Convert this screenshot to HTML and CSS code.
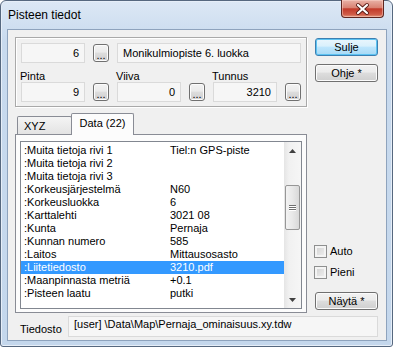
FILE: index.html
```html
<!DOCTYPE html>
<html lang="fi">
<head>
<meta charset="UTF-8">
<title>Pisteen tiedot</title>
<link rel="stylesheet" href="styles.css">
</head>
<body>

<div class="window">
    <div class="titlebar">
        <span class="title">Pisteen tiedot</span>
        <div class="close-btn">
            <svg width="41" height="16" viewBox="0 0 41 16">
                <path d="M16 4 L25 12 M25 4 L16 12" stroke="#5a1d17" stroke-width="4" stroke-linecap="round"/>
                <path d="M16 4 L25 12 M25 4 L16 12" stroke="#ffffff" stroke-width="2.2" stroke-linecap="round"/>
            </svg>
        </div>
    </div>

    <div class="client">
        <div class="main">
            <div class="left">
                <div class="groupbox">
                    <div class="field-row">
                        <div class="field num">6</div>
                        <button class="dots">...</button>
                        <div class="field wide">Monikulmiopiste 6. luokka</div>
                    </div>
                    <div class="labels">
                        <span>Pinta</span>
                        <span>Viiva</span>
                        <span>Tunnus</span>
                    </div>
                    <div class="field-row">
                        <div class="field num">9</div>
                        <button class="dots">...</button>
                        <div class="field num">0</div>
                        <button class="dots">...</button>
                        <div class="field num">3210</div>
                        <button class="dots">...</button>
                    </div>
                </div>

                <div class="tabs">
                    <div class="tab">XYZ</div>
                    <div class="tab active">Data (22)</div>
                </div>
                <div class="tab-panel">
                    <div class="listbox">
                        <div class="list-rows">
                            <div class="list-row"><span class="key">:Muita tietoja rivi 1</span><span>Tiel:n GPS-piste</span></div>
                            <div class="list-row"><span class="key">:Muita tietoja rivi 2</span><span></span></div>
                            <div class="list-row"><span class="key">:Muita tietoja rivi 3</span><span></span></div>
                            <div class="list-row"><span class="key">:Korkeusjärjestelmä</span><span>N60</span></div>
                            <div class="list-row"><span class="key">:Korkeusluokka</span><span>6</span></div>
                            <div class="list-row"><span class="key">:Karttalehti</span><span>3021 08</span></div>
                            <div class="list-row"><span class="key">:Kunta</span><span>Pernaja</span></div>
                            <div class="list-row"><span class="key">:Kunnan numero</span><span>585</span></div>
                            <div class="list-row"><span class="key">:Laitos</span><span>Mittausosasto</span></div>
                            <div class="list-row selected"><span class="key">:Liitetiedosto</span><span>3210.pdf</span></div>
                            <div class="list-row"><span class="key">:Maanpinnasta metriä</span><span>+0.1</span></div>
                            <div class="list-row"><span class="key">:Pisteen laatu</span><span>putki</span></div>
                        </div>
                        <div class="scrollbar">
                            <div class="sb-btn">
                                <svg width="7" height="4" viewBox="0 0 7 4"><path d="M0 4 L3.5 0 L7 4 Z" fill="#404040"/></svg>
                            </div>
                            <div class="sb-track">
                                <div class="sb-thumb">
                                    <span></span><span></span><span></span>
                                </div>
                            </div>
                            <div class="sb-btn">
                                <svg width="7" height="4" viewBox="0 0 7 4"><path d="M0 0 L3.5 4 L7 0 Z" fill="#404040"/></svg>
                            </div>
                        </div>
                    </div>
                </div>
            </div>

            <div class="side">
                <button class="btn default">Sulje</button>
                <button class="btn">Ohje *</button>
                <div class="checks">
                    <label class="check"><span class="box"></span>Auto</label>
                    <label class="check"><span class="box"></span>Pieni</label>
                </div>
                <button class="btn show">Näytä *</button>
            </div>
        </div>

        <div class="footer">
            <span class="footer-label">Tiedosto</span>
            <div class="field path">[user] \Data\Map\Pernaja_ominaisuus.xy.tdw</div>
        </div>
    </div>
</div>

</body>
</html>
```

FILE: styles.css
```css
body {
    margin: 0;
    padding: 0;
    background-color: #ffffff;
    font-family: "Liberation Sans", Arial, sans-serif;
    font-size: 11px;
    color: #000;
}

/* window frame */
.window {
    width: 393px;
    height: 347px;
    box-sizing: border-box;
    border: 1px solid #56687f;
    border-radius: 6px 6px 3px 3px;
    background: linear-gradient(#dce8f5, #c8daee 40px, #c4d7ec);
    box-shadow: inset 0 0 0 1px #e6eef8;
    display: flex;
    flex-direction: column;
}

.titlebar {
    height: 28px;
    display: flex;
    align-items: flex-start;
}

.title {
    font-size: 12px;
    line-height: 14px;
    margin: 7px 0 0 7px;
}

.close-btn {
    margin: -1px 8px 0 auto;
    width: 43px;
    height: 18px;
    box-sizing: border-box;
    border: 1px solid #5e2620;
    border-top: none;
    border-radius: 0 0 4px 4px;
    background: linear-gradient(#e9b2a7, #d98273 45%, #c23a2a 52%, #cf5c48 85%, #e49a80);
    box-shadow: inset 0 0 0 1px rgba(255, 220, 210, 0.45);
}

.close-btn svg {
    display: block;
    margin: 1px 0 0 0;
}

.client {
    flex: 1;
    margin: 0 5px 5px 6px;
    border: 1px solid #8ea3bd;
    background-color: #f0f0f0;
    padding: 7px 8px 3px 7px;
    display: flex;
    flex-direction: column;
}

.main {
    display: flex;
    gap: 8px;
}

.left {
    width: 292px;
    display: flex;
    flex-direction: column;
}

/* top group */
.groupbox {
    height: 70px;
    box-sizing: border-box;
    border: 1px solid #a9a9a9;
    box-shadow: inset 1px 1px 0 #fff, 1px 1px 0 #fff;
    padding: 5px 5px 4px 5px;
}

.field-row {
    display: flex;
    align-items: center;
    gap: 8px;
    height: 20px;
}

.field {
    height: 20px;
    box-sizing: border-box;
    border: 1px solid #dadada;
    background-color: #f6f6f6;
    line-height: 18px;
    white-space: nowrap;
    overflow: hidden;
}

.field.num {
    width: 64px;
    text-align: right;
    padding-right: 5px;
}

.field.wide {
    flex: 1;
    padding-left: 5px;
}

.dots {
    width: 16px;
    height: 18px;
    padding: 0;
    border: 1px solid #707070;
    border-radius: 3px;
    background: linear-gradient(#f3f3f3, #ebebeb 45%, #dddddd 50%, #cfcfcf);
    box-shadow: inset 0 0 0 1px #fcfcfc;
    font-family: "Liberation Sans", Arial, sans-serif;
    font-size: 11px;
    line-height: 20px;
    color: #000;
}

.labels {
    display: flex;
    height: 19px;
    box-sizing: border-box;
    padding-top: 7px;
    line-height: 12px;
}

.labels span {
    flex: 0 0 96px;
    margin-left: -1px;
    margin-right: 1px;
}

/* tabs */
.tabs {
    margin-top: 6px;
    height: 21px;
    display: flex;
    align-items: flex-end;
    padding-left: 2px;
}

.tab {
    width: 55px;
    height: 18px;
    box-sizing: border-box;
    border: 1px solid #898c95;
    border-bottom: none;
    border-radius: 2px 2px 0 0;
    background: linear-gradient(#f4f4f4, #e3e3e3);
    padding: 3px 0 0 6px;
    line-height: 13px;
}

.tab.active {
    width: 63px;
    height: 22px;
    margin: 0 0 -1px -1px;
    padding: 3px 0 0 0;
    text-align: center;
    background: #fcfcfc;
    position: relative;
    z-index: 1;
}

.tab-panel {
    height: 179px;
    box-sizing: border-box;
    border: 1px solid #898c95;
    background-color: #fcfcfc;
    padding: 6px 4px 3px 4px;
}

.listbox {
    height: 168px;
    box-sizing: border-box;
    border: 1px solid #828790;
    background-color: #fff;
    display: flex;
}

.list-rows {
    flex: 1;
    padding-top: 2px;
}

.list-row {
    display: flex;
    height: 13px;
    line-height: 13px;
    padding-left: 3px;
    white-space: nowrap;
}

.list-row .key {
    width: 146px;
}

.list-row.selected {
    background-color: #3399ff;
    color: #fff;
}

.scrollbar {
    width: 17px;
    display: flex;
    flex-direction: column;
    background: linear-gradient(90deg, #e5e5e5, #f1f1f1 30%, #f6f6f6);
}

.sb-btn {
    height: 17px;
    display: flex;
    align-items: center;
    justify-content: center;
}

.sb-track {
    flex: 1;
    padding-top: 26px;
}

.sb-thumb {
    height: 45px;
    box-sizing: border-box;
    margin: 0 1px;
    border: 1px solid #979797;
    border-radius: 2px;
    background: linear-gradient(90deg, #f3f3f3, #e8e8e8 50%, #d9d9d9);
    display: flex;
    flex-direction: column;
    align-items: center;
    justify-content: center;
    gap: 1px;
}

.sb-thumb span {
    width: 7px;
    height: 1px;
    background-color: #6f6f6f;
    box-shadow: 0 1px 0 #fff;
}

/* right column */
.side {
    width: 63px;
    display: flex;
    flex-direction: column;
}

.btn {
    width: 63px;
    height: 18px;
    padding: 0;
    border: 1px solid #707070;
    border-radius: 3px;
    background: linear-gradient(#f2f2f2, #ebebeb 45%, #dddddd 50%, #cfcfcf);
    box-shadow: inset 0 0 0 1px #fbfbfb;
    font-family: "Liberation Sans", Arial, sans-serif;
    font-size: 11px;
    color: #000;
    line-height: 15px;
}

.btn.default {
    margin-top: 1px;
    margin-bottom: 8px;
    border-color: #3c7fb1;
    background: linear-gradient(#eaf6fd, #d9f0fc 45%, #bee6fd 50%, #a7d9f5);
    box-shadow: inset 0 0 0 1px #5cc3f2;
}

.checks {
    margin-top: auto;
    display: flex;
    flex-direction: column;
    gap: 8px;
    margin-bottom: 13px;
}

.check {
    display: flex;
    align-items: center;
    gap: 3px;
    height: 13px;
    line-height: 13px;
    margin-left: -1px;
}

.box {
    width: 13px;
    height: 13px;
    box-sizing: border-box;
    border: 1px solid #8e8f8f;
    background: linear-gradient(135deg, #d0d0d0, #f2f2f2);
    box-shadow: inset 0 0 0 2px #f4f4f4;
}

.btn.show {
    margin-bottom: 3px;
}

/* bottom row */
.footer {
    margin-top: 3px;
    display: flex;
    height: 21px;
}

.footer-label {
    width: 48px;
    padding-left: 5px;
    align-self: flex-end;
    line-height: 13px;
    margin-bottom: 1px;
}

.field.path {
    flex: 1;
    height: 21px;
    line-height: 15px;
    padding-left: 5px;
}
```
